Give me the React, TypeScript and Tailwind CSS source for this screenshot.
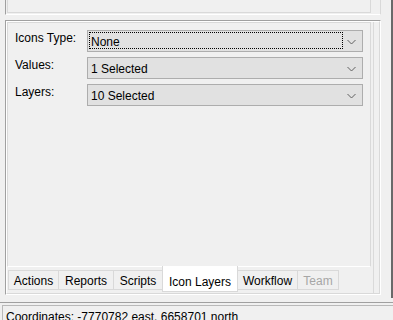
import React from "react";

type ComboProps = {
  label: string;
  value: string;
  focused?: boolean;
};

function Chevron() {
  return (
    <svg width="9" height="6" viewBox="0 0 9 6" className="block">
      <polyline points="0.5,1 4.5,5 8.5,1" fill="none" stroke="#606060" strokeWidth="1" />
    </svg>
  );
}

function ComboRow({ label, value, focused }: ComboProps) {
  return (
    <div className="flex items-start">
      <div className="w-[72px] pt-[1px] leading-[14px]">{label}</div>
      <div className="relative flex h-[22px] w-[276px] items-center border border-[#adadad] bg-[#e1e1e1]">
        {focused && (
          <div className="absolute left-[1px] top-[1px] bottom-[2px] right-[19px] border border-dotted border-black" />
        )}
        <span className="flex-1 pl-[3px] pt-[2px] leading-[14px]">{value}</span>
        <span className="mr-[6px] mt-[1px]">
          <Chevron />
        </span>
      </div>
    </div>
  );
}

const tabs = [
  { name: "Actions", w: "w-[51px]" },
  { name: "Reports", w: "w-[56px]" },
  { name: "Scripts", w: "w-[50px]" },
  { name: "Icon Layers", w: "w-[76px]", active: true },
  { name: "Workflow", w: "w-[61px]" },
  { name: "Team", w: "w-[42px]", disabled: true },
];

function TabStrip() {
  return (
    <div className="flex h-[26px] items-start pl-px">
      {tabs.map((t, i) =>
        t.active ? (
          <div
            key={t.name}
            className={`${t.w} relative z-10 -mt-px -ml-px flex h-[26px] justify-center border-x border-b border-[#d9d9d9] bg-white pt-[9px] leading-[14px]`}
          >
            {t.name}
          </div>
        ) : (
          <div
            key={t.name}
            className={`${t.w} ${i > 0 ? "-ml-px" : ""} mt-[3px] flex h-[20px] items-center justify-center border border-[#d9d9d9] pt-[1px] leading-[14px] ${
              t.disabled ? "text-[#a6a6a6]" : ""
            }`}
          >
            {t.name}
          </div>
        )
      )}
    </div>
  );
}

export default function App() {
  return (
    <div className="flex h-[320px] w-[393px] flex-col overflow-hidden bg-[#f0f0f0] font-['Liberation_Sans',Arial,sans-serif] text-[12px] text-black">
      {/* main area */}
      <div className="flex h-[302px] items-start">
        <div className="flex w-[391px] flex-col pl-[5px]">
          {/* top panel (cut off) */}
          <div className="h-[15px] w-[376px] border-l border-b border-r border-l-[#a0a0a0] border-b-white border-r-[#d9d9d9] pl-px">
            <div className="h-[13px] w-[364px] border-x border-b border-[#d9d9d9]" />
          </div>

          {/* lower panel */}
          <div className="mt-[5px] h-[275px] w-[376px] border-l border-t border-r border-b border-l-[#a0a0a0] border-t-[#a0a0a0] border-r-white border-b-white">
            <div className="flex h-full border-l border-t border-r border-b border-l-white border-t-white border-r-[#d9d9d9] border-b-[#d9d9d9]">
              <div className="flex w-[364px] flex-col">
                <div className="flex h-[245px] flex-col gap-[5px] border-x border-t border-b border-[#d9d9d9] border-b-white px-[7px] pt-[7px]">
                  <ComboRow label="Icons Type:" value="None" focused />
                  <ComboRow label="Values:" value="1 Selected" />
                  <ComboRow label="Layers:" value="10 Selected" />
                </div>
                <TabStrip />
              </div>
              <div className="ml-[2px] h-full w-px bg-[#dadada]" />
            </div>
          </div>
        </div>
        <div className="h-[298px] w-[2px] bg-[#696969]" />
      </div>

      {/* status bar */}
      <div className="h-[18px] border-t border-[#a0a0a0] pl-[2px] pt-[2px]">
        <div className="h-[15px] overflow-hidden border-l border-t border-[#b9b9b9] pl-[3px] pt-[4px] leading-[14px]">
          Coordinates: -7770782 east, 6658701 north
        </div>
      </div>
    </div>
  );
}
